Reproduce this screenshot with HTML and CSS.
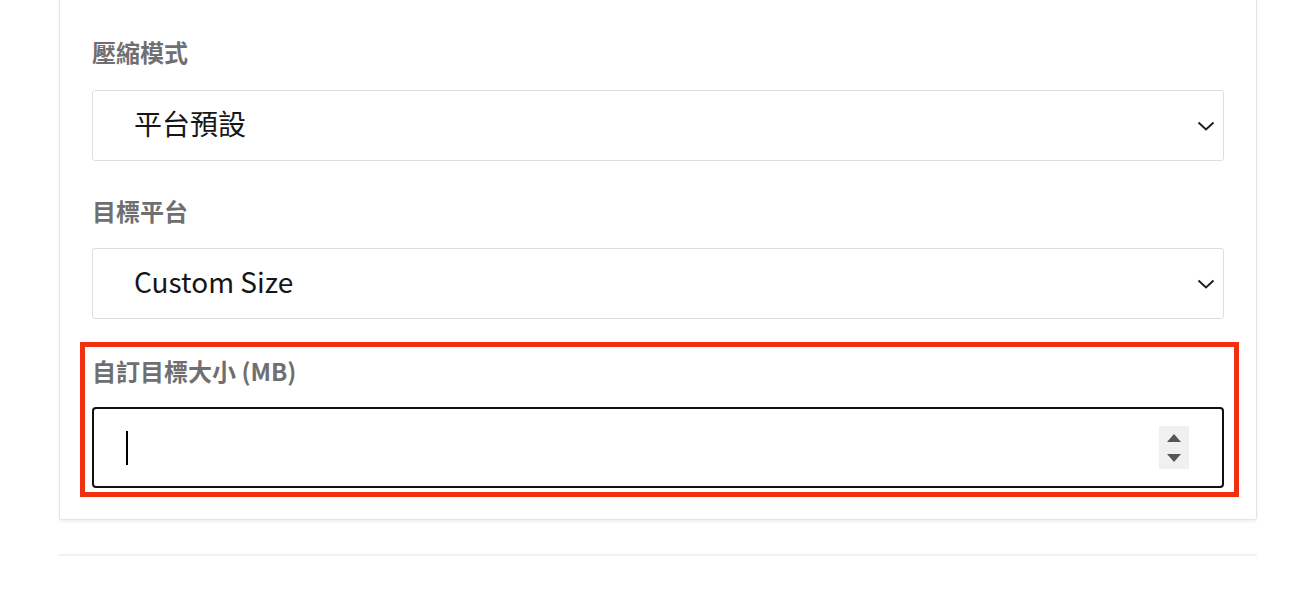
FILE: index.html
```html
<!DOCTYPE html>
<html lang="zh-Hant">
<head>
<meta charset="utf-8">
<title>壓縮設定</title>
<link rel="stylesheet" href="styles.css">
</head>
<body>
<div class="page">
  <div class="card">
    <div class="group">
      <div class="label">壓縮模式</div>
      <div class="select">
        <span class="select-text">平台預設</span>
        <svg class="chevron" width="18" height="10" viewBox="0 0 18 10"><path d="M1.5 1.5 L9 8.5 L16.5 1.5" fill="none" stroke="#1f1f1f" stroke-width="2"/></svg>
      </div>
    </div>
    <div class="group">
      <div class="label label-tight">目標平台</div>
      <div class="select">
        <span class="select-text">Custom Size</span>
        <svg class="chevron" width="18" height="10" viewBox="0 0 18 10"><path d="M1.5 1.5 L9 8.5 L16.5 1.5" fill="none" stroke="#1f1f1f" stroke-width="2"/></svg>
      </div>
    </div>
    <div class="group highlight">
      <div class="label">自訂目標大小 (MB)</div>
      <div class="input">
        <span class="caret"></span>
        <span class="spinner">
          <svg width="14" height="8" viewBox="0 0 14 8"><path d="M0 8 L7 0 L14 8 Z" fill="#555"/></svg>
          <svg width="14" height="8" viewBox="0 0 14 8"><path d="M0 0 L7 8 L14 0 Z" fill="#555"/></svg>
        </span>
      </div>
    </div>
  </div>
  <div class="divider"></div>
</div>
</body>
</html>
```

FILE: styles.css
```css
html, body {
  margin: 0;
  padding: 0;
  background: #ffffff;
}

body {
  font-family: "Noto Sans CJK TC", "Noto Sans", sans-serif;
  color: #1a1a1a;
}

.page {
  width: 1198px;
  margin-left: 59px;
}

.card {
  margin-top: -20px;
  padding: 57px 32px 22px 32px;
  border: 1px solid #e4e4e4;
  border-radius: 3px;
  box-shadow: 0 2px 3px rgba(0, 0, 0, 0.06);
  background: #fff;
}

.group + .group {
  margin-top: 36px;
}

.group.highlight {
  margin: 23px -15px 0 -12px;
  padding: 10px 10px 4px 7px;
  border: 5px solid #f2300f;
}

.label {
  font-size: 24px;
  line-height: 28px;
  font-weight: 700;
  color: #6f6f72;
  margin-bottom: 24px;
}

.label-tight {
  margin-bottom: 23px;
}

.highlight .label {
  margin-bottom: 22px;
}

.select {
  height: 71px;
  box-sizing: border-box;
  border: 1px solid #dedede;
  border-radius: 3px;
  display: flex;
  align-items: center;
  padding: 0 8px 6px 41px;
}

.select-text {
  flex: 1;
  font-size: 28px;
  line-height: 34px;
  color: #161616;
}

.chevron {
  display: block;
  margin-top: 6px;
}

.input {
  height: 81px;
  box-sizing: border-box;
  border: 2px solid #111;
  border-radius: 4px;
  display: flex;
  align-items: center;
  padding: 0 33px 0 32px;
}

.caret {
  width: 2px;
  height: 34px;
  background: #000;
  flex: none;
}

.spinner {
  margin-left: auto;
  width: 30px;
  height: 43px;
  background: #f0f0f0;
  display: flex;
  flex-direction: column;
  align-items: center;
  justify-content: center;
  gap: 12px;
}

.spinner svg {
  display: block;
}

.divider {
  margin-top: 34px;
  height: 2px;
  background: #f2f2f2;
}
```
